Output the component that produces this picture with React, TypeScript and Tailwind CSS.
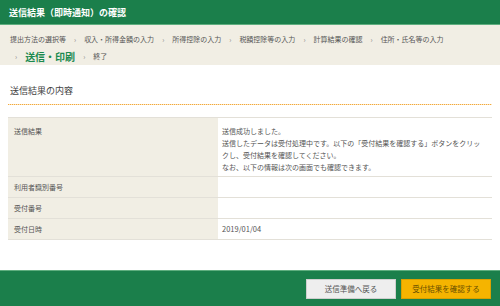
import React from "react";

const F = { fontFamily: '"Noto Sans CJK JP", "Noto Sans", sans-serif' };

function Chev() {
  return <span className="mx-[8px] text-[7px] text-[#888]">›</span>;
}

export default function App() {
  const crumbs = ["提出方法の選択等", "収入・所得金額の入力", "所得控除の入力", "税額控除等の入力", "計算結果の確認", "住所・氏名等の入力"];
  return (
    <div className="w-[500px] h-[306px] bg-white flex flex-col overflow-hidden" style={F}>
      <div className="h-[25px] bg-[#1b7f4b] border-b border-[#5fae7f] flex items-center pl-[9px]">
        <span className="text-white font-bold text-[9px] leading-none">送信結果（即時通知）の確認</span>
      </div>
      <div className="h-[40px] bg-[#f1eee4] flex flex-col pl-[10px] pt-[8px]">
        <div className="flex items-center h-[13px] text-[7px] text-[#555]">
          {crumbs.map((c, i) => (
            <React.Fragment key={c}>
              {i > 0 && <Chev />}
              <span>{c}</span>
            </React.Fragment>
          ))}
        </div>
        <div className="flex items-center h-[18px] mt-[1px] pl-[5px]">
          <span className="text-[7px] text-[#888] mr-[8px]">›</span>
          <span className="text-[10px] font-bold text-[#1b8a4f]">送信・印刷</span>
          <Chev />
          <span className="text-[7px] text-[#555]">終了</span>
        </div>
      </div>
      <div className="flex-1 px-[8px]">
        <div className="pt-[20px] pb-[7px] pl-[2px] text-[9px] text-[#444] leading-[12px]">
          送信結果の内容
        </div>
        <div className="h-[1px] bg-[repeating-linear-gradient(90deg,#f2a93b_0px,#f2a93b_1px,#fbe3bd_1px,#fbe3bd_2px)]"></div>
        <div className="mt-[12px] border-t border-[#e3e0d8] text-[7px] text-[#555]">
          <div className="grid grid-cols-[210px_1fr] border-b border-[#e3e0d8] h-[59px]">
            <div className="bg-[#f1eee4] pl-[6px] pt-[7px] leading-[12px]">送信結果</div>
            <div className="pl-[4px] pt-[7px] leading-[12px]">
              <div>送信成功しました。</div>
              <div>送信したデータは受付処理中です。以下の「受付結果を確認する」ボタンをクリッ</div>
              <div>クし、受付結果を確認してください。</div>
              <div>なお、以下の情報は次の画面でも確認できます。</div>
            </div>
          </div>
          {[
            ["利用者識別番号", ""],
            ["受付番号", ""],
            ["受付日時", "2019/01/04"],
          ].map(([k, v]) => (
            <div key={k} className="grid grid-cols-[210px_1fr] border-b border-[#e3e0d8] h-[21px]">
              <div className="bg-[#f1eee4] pl-[6px] flex items-center">{k}</div>
              <div className="pl-[4px] flex items-center text-[7.5px]">{v}</div>
            </div>
          ))}
        </div>
      </div>
      <div className="h-[36px] bg-[#1b7f4b] border-t border-[#5fae7f] flex items-center justify-end gap-[5px] pr-[9px]">
        <button className="w-[90px] h-[20px] bg-[#eeeeee] border border-[#cfcfcf] text-[7.5px] text-[#555]">送信準備へ戻る</button>
        <button className="w-[90px] h-[20px] bg-[#f5b400] border border-[#d9a000] text-[7.5px] text-[#6b5000]">受付結果を確認する</button>
      </div>
    </div>
  );
}
